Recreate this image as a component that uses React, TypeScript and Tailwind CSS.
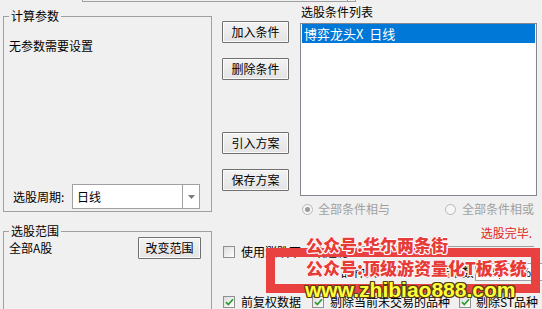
const ui = "font-['Noto_Sans_CJK_SC','Noto_Sans',sans-serif]";

function Btn({ label, className = "" }: { label: string; className?: string }) {
  return (
    <button
      className={`flex h-[22px] items-center justify-center rounded-[1px] border border-[#707070] bg-[linear-gradient(#f3f3f3,#e3e3e3)] text-[12px] leading-none text-black shadow-[inset_0_0_0_1px_#fbfbfb] ${className}`}
    >
      {label}
    </button>
  );
}

function Check({ checked = false }: { checked?: boolean }) {
  return (
    <span className="flex h-[12px] w-[12px] shrink-0 items-center justify-center border border-[#8e8f8f] bg-[linear-gradient(135deg,#dcdcdc,#ffffff)]">
      {checked && (
        <svg width="9" height="8" viewBox="0 0 9 8">
          <path d="M1 4.2l2.3 2.3L8 1.2" stroke="#2d9a2d" strokeWidth="1.7" fill="none" />
        </svg>
      )}
    </span>
  );
}

function Radio({ checked = false }: { checked?: boolean }) {
  return (
    <span className="flex h-[11px] w-[11px] shrink-0 items-center justify-center rounded-full border border-[#b8b8b8] bg-[#f6f6f6]">
      {checked && <span className="h-[5px] w-[5px] rounded-full bg-[#9a9a9a]" />}
    </span>
  );
}

export default function App() {
  return (
    <div className={`relative h-[309px] w-[542px] overflow-hidden bg-[#f0f0f0] text-[12px] text-black ${ui}`}>
      {/* bottom edge of a control cut off above */}
      <div className="ml-[82px] flex h-[2px] w-[274px] border-x border-b border-[#a0a0a0]">
        <div className="ml-auto mr-[7px] h-full border-l border-[#a0a0a0]" />
      </div>

      <div className="flex">
        {/* left column */}
        <div className="ml-[3px] w-[209px] shrink-0">
          <fieldset className="mt-[7px] h-[203px] border border-[#a0a0a0]">
            <legend className="ml-[5px] px-[2px] leading-[14px]">计算参数</legend>
            <div className="flex h-[188px] flex-col pl-[5px]">
              <div className="mt-[16px] leading-[14px]">无参数需要设置</div>
              <div className="mt-auto mb-[2px] flex items-center pl-[4px]">
                <span className="w-[59px] leading-[14px]">选股周期:</span>
                <div className="flex h-[25px] w-[128px] border border-[#a0a0a0] bg-white">
                  <span className="flex-1 pl-[4px] leading-[23px]">日线</span>
                  <span className="flex w-[17px] items-center justify-center border-l border-[#a0a0a0]">
                    <svg width="7" height="4" viewBox="0 0 7 4">
                      <path d="M0 0h7L3.5 4z" fill="#7a7a7a" />
                    </svg>
                  </span>
                </div>
              </div>
            </div>
          </fieldset>

          <fieldset className="mt-[12px] h-[100px] border border-[#a0a0a0]">
            <legend className="ml-[5px] px-[2px] leading-[14px]">选股范围</legend>
            <div className="mt-[-1px] flex h-[22px] items-center pl-[5px] pr-[10px]">
              <span className="leading-[14px]">全部A股</span>
              <Btn label="改变范围" className="ml-auto w-[63px]" />
            </div>
          </fieldset>
        </div>

        {/* right area */}
        <div className="ml-[10px] min-w-0 flex-1">
          <div className="flex">
            <div className="flex w-[67px] shrink-0 flex-col pt-[19px]">
              <Btn label="加入条件" className="w-[67px]" />
              <Btn label="删除条件" className="mt-[15px] w-[67px]" />
              <Btn label="引入方案" className="mt-[52px] w-[67px]" />
              <Btn label="保存方案" className="mt-[15px] w-[67px]" />
            </div>

            <div className="ml-[11px] w-[237px]">
              <div className="mt-[3px] pl-[1px] leading-[14px]">选股条件列表</div>
              <div className="mt-[4px] h-[173px] border border-[#828790] bg-white">
                <div className="mx-[1px] h-[19px] whitespace-pre bg-[#0078d7] pl-[2px] text-[13px] leading-[19px] text-white">
                  博弈龙头X  日线
                </div>
              </div>
              <div className="mt-[6px] flex h-[14px] items-center pl-[2px] pr-[3px] text-[#a0a0a0]">
                <Radio checked />
                <span className="ml-[5px] leading-[14px]">全部条件相与</span>
                <span className="ml-auto">
                  <Radio />
                </span>
                <span className="ml-[6px] leading-[14px]">全部条件相或</span>
              </div>
              <div className="mt-[10px] pr-[5px] text-right leading-[14px] text-[#e02424]">选股完毕.</div>
            </div>
          </div>

          <div className="mt-[5px] flex h-[14px] items-center pl-[1px]">
            <Check />
            <span className="ml-[6px] whitespace-nowrap leading-[14px]">使用涨跌不一致过滤</span>
            <div className="ml-[4px] mr-[8px] mt-[1px] h-0 flex-1 self-start border-t border-[#a0a0a0]" />
          </div>

          <div className="mt-[6px] flex h-[14px] items-center whitespace-nowrap pl-[119px]">
            <span className="shrink-0 leading-[14px]">品种数</span>
            <span className="shrink-0 leading-[14px]">5350</span>
            <span className="ml-[34px] shrink-0 leading-[14px]">选中数</span>
            <span className="ml-[1px] flex h-[18px] w-[70px] shrink-0 items-center border border-[#a0a0a0] bg-white pl-[3px]">
              255/4.8%
            </span>
          </div>

          <div className="mt-[16px] flex h-[14px] items-center whitespace-nowrap pl-[1px]">
            <Check checked />
            <span className="ml-[6px] leading-[14px]">前复权数据</span>
            <span className="ml-[11px]">
              <Check checked />
            </span>
            <span className="ml-[6px] leading-[14px]">剔除当前未交易的品种</span>
            <span className="ml-[9px]">
              <Check checked />
            </span>
            <span className="ml-[5px] leading-[14px]">剔除ST品种</span>
          </div>
        </div>
      </div>

      {/* watermark overlays */}
      <div className="pointer-events-none absolute left-[266px] top-[248px] h-[45px] w-[274px] border-[9px] border-[#e8413f]" />
      <div className="pointer-events-none absolute left-[306px] top-[236px] whitespace-nowrap font-['Noto_Sans_CJK_SC',sans-serif] text-[17px] font-black leading-[17px] text-[#e63b37] [text-shadow:1px_0_0_#fff,-1px_0_0_#fff,0_1px_0_#fff,0_-1px_0_#fff,1px_1px_0_#fde,-1px_-1px_0_#fde,1px_-1px_0_#fde,-1px_1px_0_#fde]">
        公众号:华尔两条街
      </div>
      <div className="pointer-events-none absolute left-[306px] top-[259px] whitespace-nowrap font-['Noto_Sans_CJK_SC',sans-serif] text-[17px] font-black leading-[17px] text-[#e63b37] [text-shadow:1px_0_0_#fff,-1px_0_0_#fff,0_1px_0_#fff,0_-1px_0_#fff,1px_1px_0_#fde,-1px_-1px_0_#fde,1px_-1px_0_#fde,-1px_1px_0_#fde]">
        公众号:顶级游资量化T板系统
      </div>
      <div className="pointer-events-none absolute left-[305px] top-[279px] whitespace-nowrap font-['Liberation_Sans',sans-serif] text-[21px] font-bold leading-[21px] text-[#ffff3a] [text-shadow:1px_0_0_#5a3a10,-1px_0_0_#5a3a10,0_1px_0_#5a3a10,0_-1px_0_#5a3a10,1px_1px_0_#5a3a10,-1px_-1px_0_#5a3a10,1px_-1px_0_#5a3a10,-1px_1px_0_#5a3a10]">
        www.zhibiao888.com
      </div>
    </div>
  );
}
